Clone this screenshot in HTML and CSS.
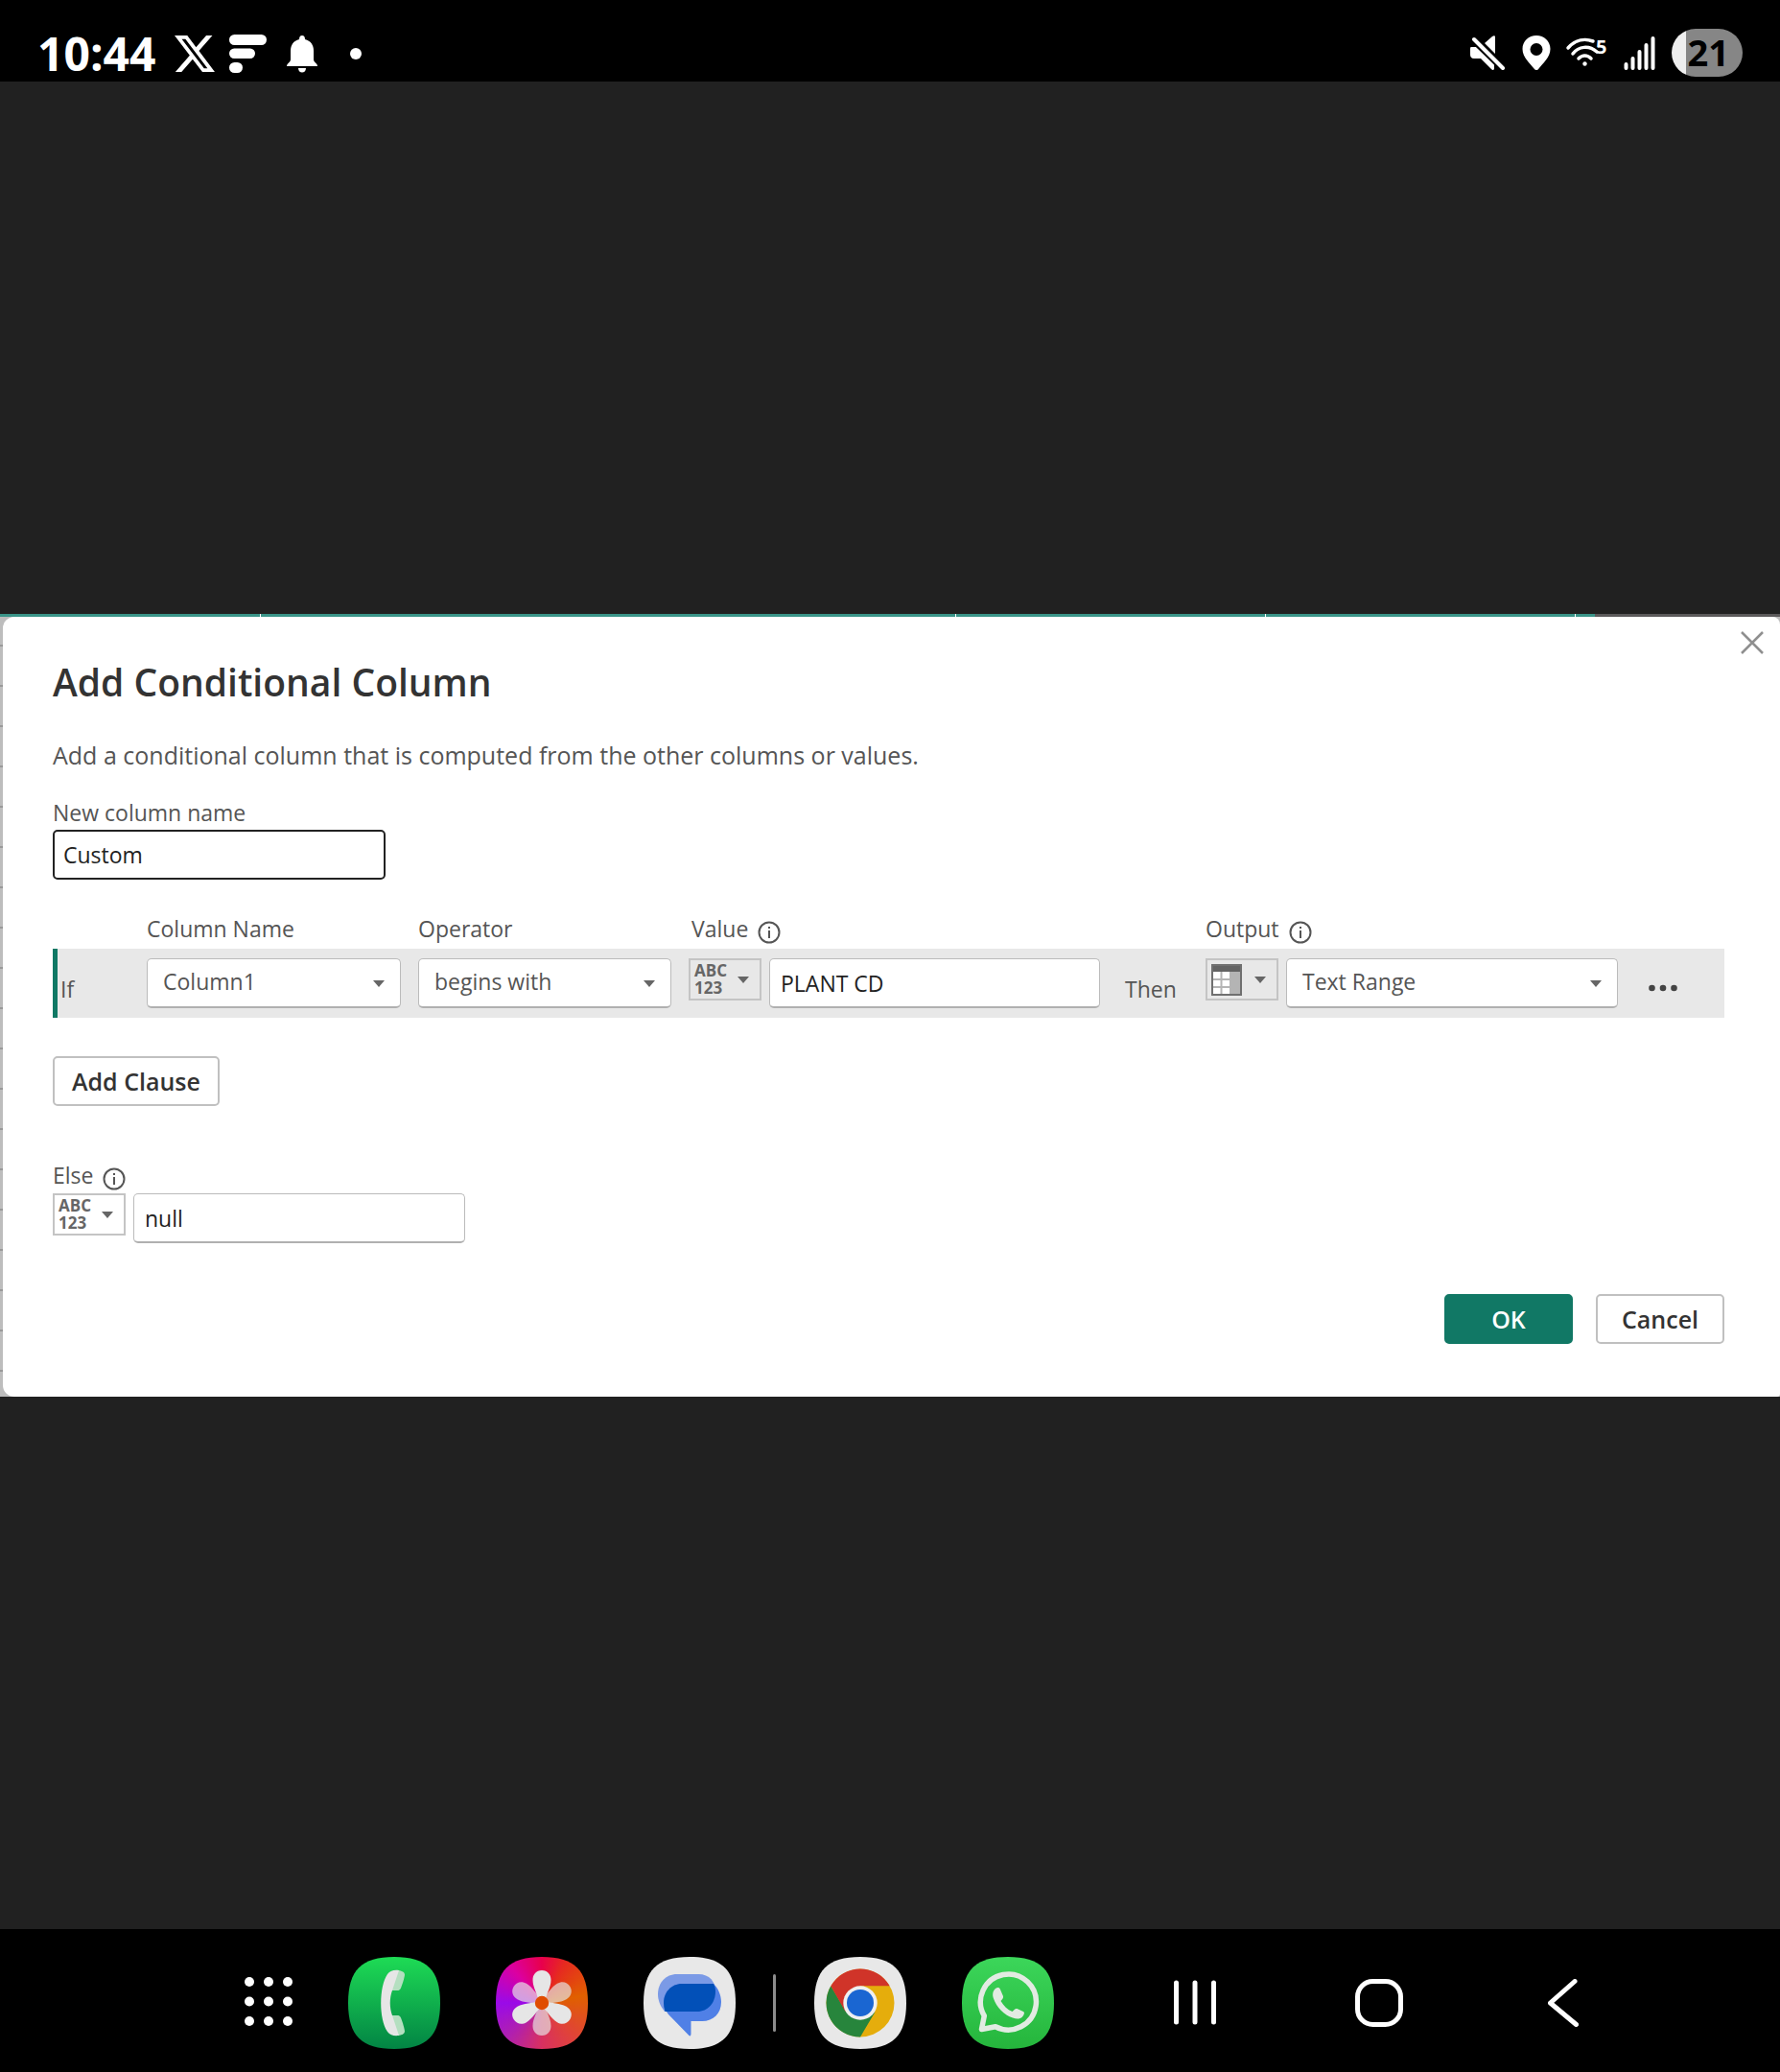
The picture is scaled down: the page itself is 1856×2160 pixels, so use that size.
FILE: index.html
```html
<!DOCTYPE html>
<html lang="en">
<head>
<meta charset="utf-8">
<meta name="viewport" content="width=device-width, initial-scale=1">
<title>Add Conditional Column</title>
<link rel="stylesheet" href="styles.css">
</head>
<body>
<header class="status">
  <div class="status-left">
    <time class="clock">10:44</time>
    <svg width="42" height="38" viewBox="1.25 2.25 21.6 19.5" preserveAspectRatio="none" fill="#fff"><path d="M18.244 2.25h3.308l-7.227 8.26 8.502 11.24H16.17l-5.214-6.817L4.99 21.75H1.68l7.73-8.835L1.254 2.25H8.08l4.713 6.231zm-1.161 17.52h1.833L7.084 4.126H5.117z"/></svg>
    <svg class="icon-feed" width="40" height="40" viewBox="0 0 40 40" fill="#fff"><rect width="39" height="11" rx="5.500"/><rect y="14.500" width="27" height="10.500" rx="5.200"/><rect y="29" width="14" height="11" rx="5.500"/></svg>
    <svg class="icon-bell" width="32" height="40" viewBox="0 0 32 40" fill="#fff"><path d="M16 1c2 0 3 1.500 3 4 6 1.500 9 6 9 12v9c0 3 4 4 4 7H0c0-3 4-4 4-7v-9C4 11 7 6.500 13 5c0-2.500 1-4 3-4zM12 35h8c0 6-8 6-8 0z"/></svg>
    <svg class="icon-more" width="12" height="12" viewBox="0 0 12 12" fill="#fff"><circle cx="6" cy="6" r="6"/></svg>
  </div>
  <div class="status-right">
    <svg width="38" height="36" viewBox="0 0 38 36" fill="#fff"><path d="M1 12h5L25 30v5c-1 1.500-2 1-3 0L11 24H4c-3 0-4-2-4-4v-5c0-2 0-3 1-3zM15 8l8-7c2-1.500 3-1 3 1v17z"/><path d="M4 4l30 30" stroke="#000" stroke-width="8"/><path d="M4 4l30 30" stroke="#fff" stroke-width="4" stroke-linecap="round"/></svg>
    <svg width="30" height="36" viewBox="0 0 30 36" fill="#fff" fill-rule="evenodd"><path d="M15 0c8 0 14.500 6 14.500 14 0 9-8 15-12 20.500-1.500 2-3.500 2-5 0C8.500 29 .5 23 .5 14 .5 6 7 0 15 0zm0 8a6.500 6.500 0 100 13 6.500 6.500 0 000-13z"/></svg>
    <svg width="44" height="32" viewBox="0 0 44 32" overflow="visible" fill="none" stroke="#fff" stroke-width="3.500" stroke-linecap="round"><path d="M2 11C10 2 20 1 28 4M7 17c6-8 17-9 25-2M13 22c4-4 9-4 13 0"/><circle cx="19.500" cy="27.500" r="2.200" fill="#fff" stroke="none"/><text class="wifi-band" x="31" y="17">5</text></svg>
    <svg width="34" height="36" viewBox="0 0 34 36" stroke="#fff" stroke-width="4" stroke-linecap="round"><path d="M2.500 30v4M9.500 24v10M16.500 17v17M23.500 10v24M30.500 3v31"/></svg>
    <span class="battery">21</span>
  </div>
</header>

<main class="stage">
  <div class="backdrop">
    <div class="sheet-head"><span></span><span></span><span></span><span></span><span></span></div>
    <form class="dialog">
      <button class="close" type="button" aria-label="Close"><svg width="24" height="24" viewBox="0 0 24 24" fill="none" stroke="#8f8f8f" stroke-width="2.500"><path d="M1 1l22 22M23 1L1 23"/></svg></button>
      <h1>Add Conditional Column</h1>
      <p class="intro">Add a conditional column that is computed from the other columns or values.</p>
      <label class="caption" for="name">New column name</label>
      <input class="box name" id="name" type="text" value="Custom">

      <div class="clause heads">
        <span></span>
        <label for="column">Column Name</label>
        <label for="operator">Operator</label>
        <span class="with-info value-head"><label for="value">Value</label>
          <svg class="info" width="24" height="24" viewBox="0 0 24 24"><circle cx="12" cy="12" r="10.500"/><path d="M12 10v8M12 6v2"/></svg></span>
        <span></span>
        <span class="with-info"><label for="output">Output</label>
          <svg class="info" width="24" height="24" viewBox="0 0 24 24"><circle cx="12" cy="12" r="10.500"/><path d="M12 10v8M12 6v2"/></svg></span>
      </div>

      <div class="clause row">
        <span class="word">If</span>
        <span class="pick"><select class="box" id="column"><option>Column1</option></select><svg class="caret" width="12" height="7" viewBox="0 0 12 7"><path d="M0 0h12L6 7z"/></svg></span>
        <span class="pick"><select class="box" id="operator"><option>begins with</option></select><svg class="caret" width="12" height="7" viewBox="0 0 12 7"><path d="M0 0h12L6 7z"/></svg></span>
        <span class="pair">
          <button class="type" type="button"><span>ABC<br>123</span><svg class="caret" width="12" height="7" viewBox="0 0 12 7"><path d="M0 0h12L6 7z"/></svg></button>
          <input class="box" id="value" type="text" value="PLANT CD">
        </span>
        <span class="word">Then</span>
        <span class="pair">
          <button class="type" type="button" aria-label="Column"><svg width="32" height="33" viewBox="0 0 32 33"><path fill="#fff" d="M1 8h20v24H1z"/><path fill="#b4b4b4" d="M21 8h10v24H21z"/><path fill="#636363" d="M0 0h32v8H0z"/><path fill="none" stroke="#b4b4b4" stroke-width="2" d="M10.500 8v24M20 8v24M1 16h20M1 24h20"/><path fill="none" stroke="#707070" stroke-width="2" d="M1 1h30v31H1z"/></svg><svg class="caret" width="12" height="7" viewBox="0 0 12 7"><path d="M0 0h12L6 7z"/></svg></button>
          <span class="pick"><select class="box" id="output"><option>Text Range</option></select><svg class="caret" width="12" height="7" viewBox="0 0 12 7"><path d="M0 0h12L6 7z"/></svg></span>
        </span>
        <button class="dots" type="button" aria-label="More"><svg width="30" height="8" viewBox="0 0 30 8" fill="#444"><circle cx="3.500" cy="4" r="3.300"/><circle cx="15" cy="4" r="3.300"/><circle cx="26.500" cy="4" r="3.300"/></svg></button>
      </div>

      <button class="btn add" type="button">Add Clause</button>

      <span class="with-info else"><label for="else">Else</label>
        <svg class="info" width="24" height="24" viewBox="0 0 24 24"><circle cx="12" cy="12" r="10.500"/><path d="M12 10v8M12 6v2"/></svg></span>
      <div class="pair else-pair">
        <button class="type" type="button"><span>ABC<br>123</span><svg class="caret" width="12" height="7" viewBox="0 0 12 7"><path d="M0 0h12L6 7z"/></svg></button>
        <input class="box" id="else" type="text" value="null">
      </div>

      <div class="actions">
        <button class="btn primary" type="button">OK</button>
        <button class="btn" type="button">Cancel</button>
      </div>
    </form>
  </div>
</main>

<nav class="taskbar">
  <button class="app" type="button" aria-label="All apps"><svg width="50" height="54" viewBox="0 0 50 54" fill="#fff"><circle cx="5" cy="5" r="5"/><circle cx="25" cy="5" r="5"/><circle cx="45" cy="5" r="5"/><circle cx="5" cy="25.500" r="5"/><circle cx="25" cy="25.500" r="5"/><circle cx="45" cy="25.500" r="5"/><circle cx="5" cy="46" r="5"/><circle cx="25" cy="46" r="5"/><circle cx="45" cy="46" r="5"/></svg></button>
  <button class="app tile phone" type="button" aria-label="Phone"><svg width="96" height="96" viewBox="0 0 96 96"><path fill="#b4dfc0" d="M51 14c4 0 8 1.500 8 4.500 0 2-2 9-4 14-1 2-2 2.500-4 2.500h-8zM51 82c4 0 8-1.500 8-4.500 0-2-2-9-4-14-1-2-2-2.500-4-2.500h-8z"/><path fill="#e6e6e6" d="M53 14l-7 21c-3 8-3 18 0 26l7 21c-5 .5-9 0-12-4-9-13-9-47 0-60 3-4 7-4.500 12-4z"/></svg></button>
  <button class="app tile gallery" type="button" aria-label="Gallery"><svg width="96" height="96" viewBox="0 0 96 96"><defs><path id="petal" d="M48 14c6 0 9.500 4.500 9.500 10 0 8-5 14-6.500 24h-6c-1.500-10-6.500-16-6.500-24 0-5.500 3.500-10 9.500-10z"/></defs><g fill="#e6e6e6"><g opacity=".68"><use href="#petal" transform="rotate(60 48 48)"/><use href="#petal" transform="rotate(180 48 48)"/><use href="#petal" transform="rotate(300 48 48)"/></g><use href="#petal"/><use href="#petal" transform="rotate(120 48 48)"/><use href="#petal" transform="rotate(240 48 48)"/></g><circle cx="48" cy="48" r="7.200" fill="#e04c00"/></svg></button>
  <button class="app tile messages" type="button" aria-label="Messages"><svg width="96" height="96" viewBox="0 0 96 96"><path fill="#7b9ae6" d="M35 18h22c12 0 18 8 18 18 0 12-8 21-19 21H22c-4-5-7-11-7-18 0-12 8-21 20-21z"/><path fill="#5080e6" d="M40 28h33c5 5 8 12 8 19 0 12-8 20-20 20H49.500v13c0 3-1.500 3-3 1L26 60c-3-4-5-8-5-12 0-11 8-20 19-20z"/><path fill="#0250b8" d="M40 28h33c1.300 2.500 2 5 2 8 0 12-8 21-19 21H22.500c-1-3-1.500-6-1.500-9 0-11 8-20 19-20z"/></svg></button>
  <span class="divider"></span>
  <button class="app tile chrome" type="button" aria-label="Chrome"><svg width="96" height="96" viewBox="0 0 96 96"><circle cx="48" cy="48" r="35.500" fill="#e5ad0c"/><path fill="#27853c" d="M48 83.500A35.500 35.500 0 0117.300 30.200L33 57l30.400.4z"/><path fill="#d03429" d="M17.300 30.200A35.500 35.500 0 0178.700 30.200H48L32.400 57z"/><circle cx="48" cy="48" r="17.700" fill="#f0f0f0"/><circle cx="48" cy="48" r="14" fill="#1a66d2"/></svg></button>
  <button class="app tile whatsapp" type="button" aria-label="WhatsApp"><svg width="96" height="96" viewBox="0 0 96 96"><path fill="none" stroke="#e2ebe2" stroke-width="5.500" stroke-linejoin="round" d="M20.500 75.500l2.800-14A29 29 0 1135 72.700z"/><path fill="#e2ebe2" d="M35 33c2-1.500 4-1.500 5 1l3 7c.5 2-1 3-2.500 5 3 5 7 9 12 11 2-2 3-3.500 5-3l6.500 3c2 1 .5 4-1 5.500-2.500 2.500-6 2.500-10 1-9-3-17-11-20-20-1.500-4-1-8 2-10.500z"/></svg></button>
  <div class="keys">
    <button class="key" type="button" aria-label="Recents"><svg width="44" height="50" viewBox="0 0 44 50"><path d="M2.500 4v41M22 4v41M41.500 4v41"/></svg></button>
    <button class="key" type="button" aria-label="Home"><svg width="50" height="50" viewBox="0 0 50 50"><rect x="2.500" y="2.500" width="45" height="45" rx="16"/></svg></button>
    <button class="key" type="button" aria-label="Back"><svg width="32" height="50" viewBox="0 0 32 50"><path d="M28 2.500L2.500 25 29.500 47.500"/></svg></button>
  </div>
</nav>
</body>
</html>
```
FILE: styles.css
```css
* {
  box-sizing: border-box;
}

body {
  margin: 0;
  min-height: 100vh;
  display: flex;
  flex-direction: column;
  background: #000;
  color: #555;
  font-family: "Open Sans", "Noto Sans", sans-serif;
  font-size: 23px;
  line-height: 32px;
}

button,
input,
select {
  font: inherit;
  color: inherit;
  margin: 0;
  padding: 0;
  border: 0;
  background: none;
}

svg {
  display: block;
  flex: none;
}

/* Status bar */
.status {
  height: 85px;
  padding: 28px 39px 0 39px;
  display: flex;
  justify-content: space-between;
}

.status-left,
.status-right {
  height: 56px;
  display: flex;
  align-items: center;
}

.clock {
  margin-right: 20px;
  color: #fff;
  font-size: 48px;
  font-weight: 700;
}

.icon-feed {
  margin-left: 15px;
}

.icon-bell {
  margin-left: 20px;
}

.icon-more {
  margin-left: 34px;
}

.status-right {
  gap: 16px;
  height: 54px;
}

.wifi-band {
  fill: #fff;
  stroke: none;
  font-size: 20px;
  font-weight: 700;
}

.battery {
  width: 74px;
  height: 50px;
  padding-right: 14px;
  border-radius: 25px;
  background: linear-gradient(90deg, #eee 15px, #868686 15px);
  color: #000;
  font-size: 38px;
  font-weight: 700;
  line-height: 48px;
  text-align: right;
}

/* Dialog over the sheet */
.stage {
  flex: 1;
  display: flex;
  flex-direction: column;
  justify-content: center;
  background: #212121;
}

.backdrop {
  padding-left: 3px;
  background: repeating-linear-gradient(#bdbdbd 0 32px, #999 32px 34px, #bdbdbd 34px 42px);
}

.sheet-head {
  height: 3px;
  margin-left: -3px;
  display: grid;
  grid-template-columns: 272fr 725fr 323fr 323fr 213fr;
  gap: 1px;
  background: #fff;
}

.sheet-head span {
  background: #3a9488;
}

.sheet-head span:last-child {
  background: linear-gradient(90deg, #3a9488 20px, #5c5a5b 20px);
}

.dialog {
  position: relative;
  padding: 42px 58px 55px 52px;
  border-radius: 12px 8px 3px 12px;
  background: #fff;
}

.close {
  position: absolute;
  top: 15px;
  right: 17px;
}

h1 {
  margin: 0;
  color: #333;
  font-size: 39px;
  font-weight: 600;
  line-height: 52px;
}

.intro {
  margin: 34px 0 28px;
  font-size: 25px;
}

.caption {
  display: block;
}

.box {
  width: 100%;
  height: 52px;
  padding: 1px 11px 0;
  border: 1px solid #bbb;
  border-bottom: 2px solid #b0b0b0;
  border-radius: 5px;
  background: #fff;
  color: #222;
}

.name {
  width: 347px;
  padding: 0 9px;
  margin-top: 2px;
  border: 2px solid #222;
}

.clause {
  display: grid;
  grid-template-columns: 80px 265px 264px 429px 74px 430px 1fr;
  column-gap: 18px;
}

.heads {
  margin-top: 35px;
}

.with-info {
  display: flex;
  gap: 10px;
}

.value-head {
  padding-left: 3px;
}

.info {
  margin-top: 8px;
  fill: none;
  stroke: #555;
  stroke-width: 2;
}

.row {
  height: 72px;
  padding-top: 10px;
  margin-top: 5px;
  background: linear-gradient(90deg, #0f7864 5px, #e8e8e8 5px);
}

.word {
  padding: 16px 0 0 8px;
}

.pick {
  width: 100%;
  display: grid;
  align-items: center;
}

.row > .pick {
  height: 52px;
}

.pick .box {
  grid-area: 1 / 1;
  appearance: none;
  padding: 0 16px 4px;
  color: #555;
}

.pick .caret {
  grid-area: 1 / 1;
  justify-self: end;
  margin-right: 17px;
}

.caret {
  fill: #666;
}

.pair {
  height: 52px;
  display: flex;
  align-items: flex-start;
  gap: 8px;
}

.type {
  flex: none;
  width: 76px;
  height: 44px;
  padding: 0 11px 0 4px;
  border: 2px solid #c4c4c4;
  display: flex;
  align-items: center;
  justify-content: space-between;
  color: #666;
  font-size: 17px;
  font-weight: 700;
  line-height: 18px;
  text-align: left;
}

.dots {
  height: 8px;
  margin: 27px 0 0 14px;
  justify-self: start;
}

.btn {
  min-width: 134px;
  height: 52px;
  padding: 0 18px;
  border: 2px solid #c0c0c0;
  border-radius: 5px;
  color: #333;
  font-size: 25px;
  font-weight: 600;
}

.add {
  display: block;
  margin-top: 40px;
}

.else {
  margin-top: 56px;
}

.else-pair {
  width: 430px;
  margin-top: 3px;
}

.actions {
  margin-top: 53px;
  display: flex;
  justify-content: flex-end;
  gap: 24px;
}

.primary {
  border-color: #117865;
  background: #117865;
  color: #fff;
}

/* Taskbar */
.taskbar {
  height: 149px;
  padding: 5px 0 0 255px;
  display: flex;
  align-items: center;
}

.app {
  flex: none;
}

.tile {
  width: 96px;
  height: 96px;
  margin-left: 58px;
  clip-path: path("M48 0C82 0 96 14 96 48S82 96 48 96 0 82 0 48 14 0 48 0Z");
}

.phone {
  background: linear-gradient(#1edb55, #028444);
}

.gallery {
  background: conic-gradient(#e8004c, #e62a20 30deg, #e06000 80deg, #e0423c 140deg, #d83060 180deg, #b020b0 225deg, #9a0ae8 270deg, #dc00a0 320deg, #e8004c);
}

.messages,
.chrome {
  background: #e8e8e8;
}

.divider {
  width: 3px;
  height: 60px;
  margin-left: 39px;
  border-radius: 2px;
  background: #8c8c8c;
}

.divider + .tile {
  margin-left: 40px;
}

.whatsapp {
  background: linear-gradient(#3cd65a, #25b53c);
}

.keys {
  margin-left: 51px;
  display: flex;
}

.key {
  width: 192px;
  display: flex;
  justify-content: center;
}

.key svg {
  fill: none;
  stroke: #fff;
  stroke-width: 5;
  stroke-linecap: round;
  stroke-linejoin: round;
}
```
